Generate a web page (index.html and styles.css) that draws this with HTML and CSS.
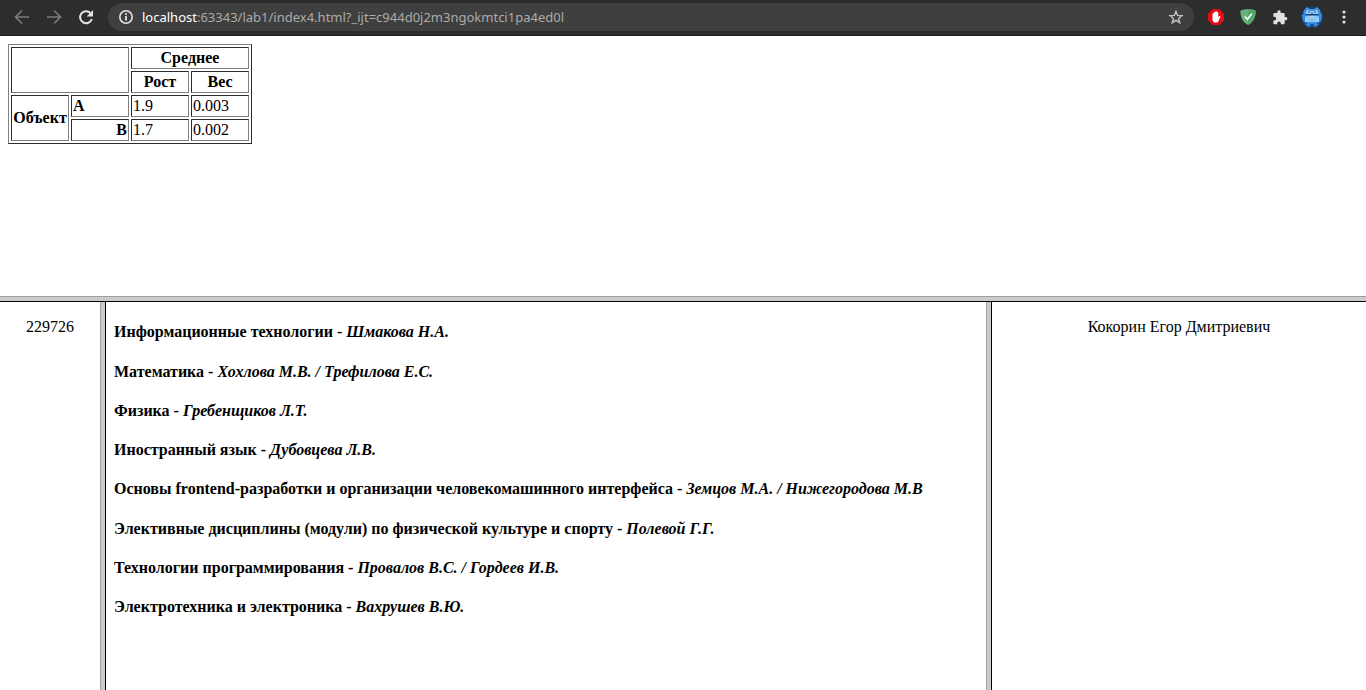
FILE: index.html
```html
<!DOCTYPE html>
<html lang="ru">
<head>
<meta charset="utf-8">
<title>index4.html</title>
<link rel="stylesheet" href="styles.css">
</head>
<body>
<header class="toolbar">
  <nav class="nav">
    <button class="icon-button dim" aria-label="Назад"><svg viewBox="0 0 16 16"><path d="M15 8H2M8 1.5 1.5 8 8 14.5" fill="none" stroke="currentColor" stroke-width="1.7"/></svg></button>
    <button class="icon-button dim" aria-label="Вперёд"><svg viewBox="0 0 16 16"><path d="M1 8h13M8 1.5 14.5 8 8 14.5" fill="none" stroke="currentColor" stroke-width="1.7"/></svg></button>
    <button class="icon-button" aria-label="Обновить"><svg viewBox="0 0 16 16"><path d="M13.8 10A6 6 0 1 1 12.4 4" fill="none" stroke="currentColor" stroke-width="2"/><path d="M15 1v6.4H8.6z" fill="currentColor"/></svg></button>
  </nav>
  <div class="address">
    <button class="icon-button" aria-label="Сведения о сайте"><svg viewBox="0 0 16 16"><circle cx="8" cy="8" r="6.2" fill="none" stroke="currentColor" stroke-width="1.6"/><path d="M8 7v4.5M8 4.2v1.7" stroke="currentColor" stroke-width="1.8"/></svg></button>
    <a class="url" href="#"><span class="host">localhost</span>:63343/lab1/index4.html?_ijt=c944d0j2m3ngokmtci1pa4ed0l</a>
    <button class="icon-button star" aria-label="Добавить в закладки"><svg viewBox="0 0 16 16"><path d="m8 2.4 1.6 4 4.3.3-3.3 2.8 1.1 4.2L8 11.4l-3.7 2.3 1.1-4.2-3.3-2.8 4.3-.3z" fill="none" stroke="currentColor" stroke-width="1.4"/></svg></button>
  </div>
  <div class="extensions">
    <button class="icon-button" aria-label="AdBlock"><svg viewBox="0 0 16 16"><path d="M4.7 0h6.6L16 4.7v6.6L11.3 16H4.7L0 11.3V4.7z" fill="#e40d13"/><path d="M4.5 8.2V4.7q.7-.9 1.4 0V3.2q.8-.9 1.5 0v-.7q.7-.9 1.4 0v.8q.8-.8 1.5.1v5l1-1.3q1-.5 1.2.3L10.6 12q-.8 1.6-2.7 1.6-3.4 0-3.4-3.4z" fill="#fff"/></svg></button>
    <button class="icon-button" aria-label="AdGuard"><svg viewBox="0 0 16 16"><path d="M8 0q4.2.1 7.5 1.5.8 9.5-7.5 14.5Q-.3 11 .5 1.5 3.8.1 8 0z" fill="#67b279"/><path d="M8 0q4.2.1 7.5 1.5.8 9.5-7.5 14.5z" fill="#56a669"/><path d="m4.7 7.5 2.7 2.7 4.4-5.4" fill="none" stroke="#fff" stroke-width="1.6"/></svg></button>
    <button class="icon-button" aria-label="Расширения"><svg viewBox="0 -1 24 24"><path d="M20.5 11H19V7c0-1.1-.9-2-2-2h-4V3.5a2.5 2.5 0 0 0-5 0V5H4c-1.1 0-2 .9-2 2v3.8h1.5a2.7 2.7 0 0 1 0 5.4H2V20c0 1.1.9 2 2 2h3.8v-1.5a2.7 2.7 0 0 1 5.4 0V22H17c1.1 0 2-.9 2-2v-4h1.5a2.5 2.5 0 0 0 0-5z" fill="#dfe0e2"/></svg></button>
    <button class="icon-button avatar" aria-label="Профиль"><svg viewBox="0 0 22 22"><circle cx="11" cy="11" r="10.7" fill="#123b70"/><path d="M2 6 4 3l2-2 3 2h4l3-2 3 3 1 4H3z" fill="#3f92e5"/><path d="M6 3.5 8 5h6l2-1.5 1 4.5H5z" fill="#a9d5fa"/><path d="M1 8h4v9H3l-2-5zM17 8h4v5l-2 4h-2z" fill="#2f86df"/><path d="M4 9h14v7H4z" fill="#9bcdf8"/><path d="M4 16h14v2l-3 3h-3v-3h-2v3H7l-3-3z" fill="#3288df"/><path d="M7 6h2M13 6h2M10 7h2M4 9h14M3 17h3M16 17h3M8 20h2M12 20h2" stroke="#06458a" stroke-width="1"/><path d="M4 11h3M15 11h3M7 14h8" stroke="#62aef0" stroke-width="1"/></svg></button>
    <button class="icon-button" aria-label="Меню"><svg viewBox="0 0 16 16"><g fill="currentColor"><circle cx="8" cy="3" r="1.6"/><circle cx="8" cy="8" r="1.6"/><circle cx="8" cy="13" r="1.6"/></g></svg></button>
  </div>
</header>
<main class="frames">
  <section class="frame">
    <table class="data">
      <colgroup><col class="col"><col class="col"><col class="col"><col class="col"></colgroup>
      <tr><td colspan="2" rowspan="2"></td><th colspan="2">Среднее</th></tr>
      <tr><th>Рост</th><th>Вес</th></tr>
      <tr><th rowspan="2">Объект</th><th class="start">A</th><td>1.9</td><td>0.003</td></tr>
      <tr><th class="end">B</th><td>1.7</td><td>0.002</td></tr>
    </table>
  </section>
  <div class="divider horizontal"></div>
  <div class="columns">
    <section class="frame centered"><p>229726</p></section>
    <div class="divider vertical"></div>
    <section class="frame">
      <h4>Информационные технологии - <i>Шмакова Н.А.</i></h4>
      <h4>Математика - <i>Хохлова М.В. / Трефилова Е.С.</i></h4>
      <h4>Физика - <i>Гребенщиков Л.Т.</i></h4>
      <h4>Иностранный язык - <i>Дубовцева Л.В.</i></h4>
      <h4>Основы frontend-разработки и организации человекомашинного интерфейса - <i>Земцов М.А. / Нижегородова М.В</i></h4>
      <h4>Элективные дисциплины (модули) по физической культуре и спорту - <i>Полевой Г.Г.</i></h4>
      <h4>Технологии программирования - <i>Провалов В.С. / Гордеев И.В.</i></h4>
      <h4>Электротехника и электроника - <i>Вахрушев В.Ю.</i></h4>
    </section>
    <div class="divider vertical"></div>
    <section class="frame centered"><p>Кокорин Егор Дмитриевич</p></section>
  </div>
</main>
</body>
</html>
```
FILE: styles.css
```css
* { box-sizing: border-box; }
body {
  margin: 0;
  height: 100vh;
  display: flex;
  flex-direction: column;
  background: #fff;
  color: #000;
  font: 16px/18px "Liberation Serif", "Times New Roman", serif;
}
.toolbar {
  flex: none;
  display: flex;
  align-items: center;
  height: 36px;
  padding: 0 14px 2px;
  background: #2d2d2d;
  border-bottom: 1px solid #1f1f1f;
  color: #e2e2e2;
}
.nav { display: flex; gap: 16px; margin-right: 14px; }
.icon-button {
  flex: none;
  width: 16px;
  height: 16px;
  padding: 0;
  border: 0;
  background: none;
  color: inherit;
}
.icon-button svg { display: block; width: 100%; height: 100%; }
.dim { color: #7c7c7c; }
.address {
  flex: 1;
  display: flex;
  align-items: center;
  gap: 8px;
  height: 28px;
  padding: 0 10px;
  border-radius: 14px;
  background: #3f3f3f;
}
.star { margin-left: auto; color: #c4c4c4; }
.url {
  color: #ababab;
  text-decoration: none;
  font: 13px/20px "Noto Sans", "Segoe UI", sans-serif;
}
.host { color: #fff; }
.extensions { display: flex; align-items: center; gap: 16px; margin-left: 14px; }
.avatar { width: 22px; height: 22px; margin: 0 -3px; }
.frames { flex: 1; min-height: 0; display: grid; grid-template-rows: 260fr 6px 388fr; }
.frame { min-width: 0; min-height: 0; padding: 0 8px; overflow: auto; }
.columns { min-height: 0; display: grid; grid-template-columns: 100fr 6px 880fr 6px 374fr; }
.centered { text-align: center; }
.divider { background: #cbcbcb; }
.horizontal { border-top: 1px solid #a0a0a0; border-bottom: 1px solid #000; }
.vertical { border-left: 1px solid #a0a0a0; border-right: 1px solid #000; }
.data {
  margin-top: 8px;
  border: 1px solid;
  border-color: #808080 #2c2c2c #2c2c2c #808080;
  border-spacing: 2px;
}
.data th, .data td {
  padding: 1px;
  border: 1px solid;
  border-color: #2c2c2c #808080 #808080 #2c2c2c;
}
.col { width: 58px; }
.data .start { text-align: left; }
.data .end { text-align: right; }
```
